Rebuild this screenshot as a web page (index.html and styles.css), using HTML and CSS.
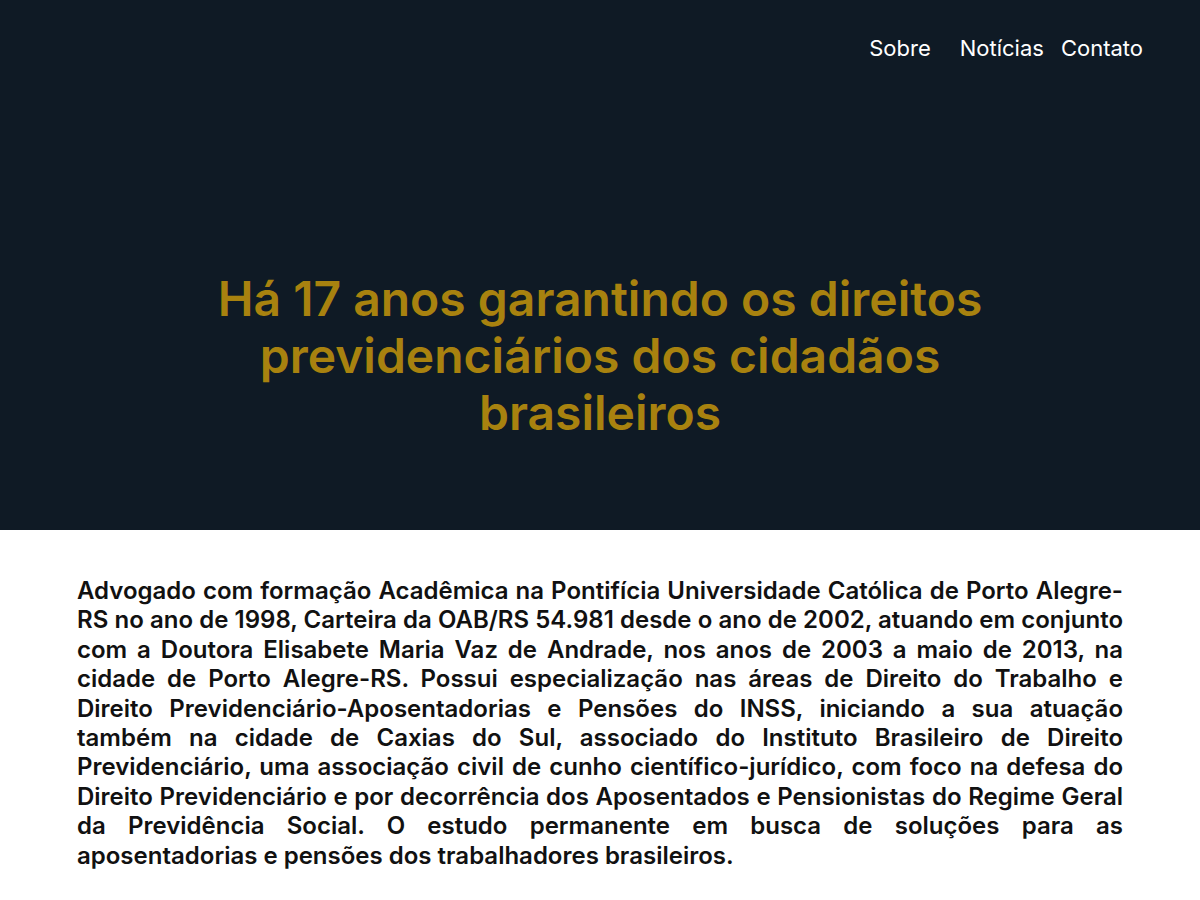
FILE: index.html
```html
<!DOCTYPE html>
<html lang="pt-BR">
<head>
<meta charset="utf-8">
<title>Advocacia Previdenciária</title>
<link rel="stylesheet" href="styles.css">
</head>
<body>
<header class="hero">
  <nav class="nav">
    <a class="nav-link nav-sobre" href="#">Sobre</a>
    <a class="nav-link" href="#">Notícias</a>
    <a class="nav-link" href="#">Contato</a>
  </nav>
  <div class="hero-body">
    <h1 class="hero-title">Há 17 anos garantindo os direitos previdenciários dos cidadãos brasileiros</h1>
  </div>
</header>
<main class="about">
  <p class="about-text">Advogado com formação Acadêmica na Pontifícia Universidade Católica de Porto Alegre-RS no ano de 1998, Carteira da OAB/RS 54.981 desde o ano de 2002, atuando em conjunto com a Doutora Elisabete Maria Vaz de Andrade, nos anos de 2003 a maio de 2013, na cidade de Porto Alegre-RS. Possui especialização nas áreas de Direito do Trabalho e Direito Previdenciário-Aposentadorias e Pensões do INSS, iniciando a sua atuação também na cidade de Caxias do Sul, associado do Instituto Brasileiro de Direito Previdenciário, uma associação civil de cunho científico-jurídico, com foco na defesa do Direito Previdenciário e por decorrência dos Aposentados e Pensionistas do Regime Geral da Previdência Social. O estudo permanente em busca de soluções para as aposentadorias e pensões dos trabalhadores brasileiros.</p>
</main>
</body>
</html>
```
FILE: styles.css
```css
* { box-sizing: border-box; }
html, body { margin: 0; padding: 0; }
body {
  font-family: Inter, "Noto Sans", sans-serif;
  background: #ffffff;
  color: #111111;
}
.hero {
  background: #0f1a25;
  height: 530px;
  display: flex;
  flex-direction: column;
}
.nav {
  display: flex;
  justify-content: flex-end;
  gap: 17px;
  padding: 33px 57px 0 0;
}
.nav-link {
  color: #ffffff;
  text-decoration: none;
  font-size: 22px;
  line-height: 30px;
}
.nav-sobre { margin-right: 12px; }
.hero-body {
  display: flex;
  justify-content: center;
  padding-top: 207px;
}
.hero-title {
  margin: 0;
  max-width: 800px;
  text-align: center;
  color: #a8820f;
  font-size: 48px;
  font-weight: 600;
  line-height: 57px;
}
.about {
  padding: 46px 77px 40px;
}
.about-text {
  margin: 0;
  text-align: justify;
  font-size: 24px;
  font-weight: 600;
  line-height: 29.4px;
}
```
